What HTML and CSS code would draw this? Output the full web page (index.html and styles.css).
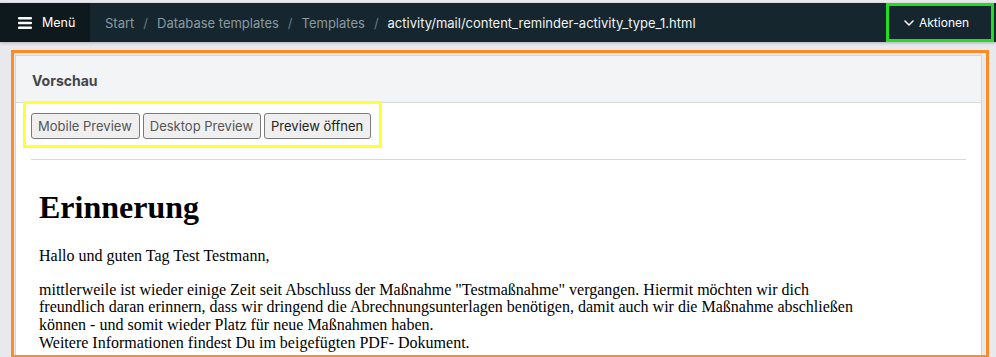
FILE: index.html
```html
<!DOCTYPE html>
<html lang="de">
<head>
    <meta charset="UTF-8">
    <title>Vorschau</title>
    <link rel="stylesheet" href="styles.css">
</head>
<body>
    <header class="topbar">
        <button class="menu-button">
            <svg class="menu-icon" width="14" height="12" viewBox="0 0 14 12">
                <rect x="0" y="0" width="14" height="2.4" rx="1" fill="#fff"/>
                <rect x="0" y="4.8" width="14" height="2.4" rx="1" fill="#fff"/>
                <rect x="0" y="9.6" width="14" height="2.4" rx="1" fill="#fff"/>
            </svg>
            Menü
        </button>
        <nav class="breadcrumb">
            <a href="#">Start</a>
            <span class="sep">/</span>
            <a href="#">Database templates</a>
            <span class="sep">/</span>
            <a href="#">Templates</a>
            <span class="sep">/</span>
            <span class="current">activity/mail/content_reminder-activity_type_1.html</span>
        </nav>
        <div class="actions-mark">
            <button class="actions-button">
                <svg width="10" height="6" viewBox="0 0 10 6">
                    <path d="M1 1 L5 5 L9 1" fill="none" stroke="#fff" stroke-width="1.5" stroke-linecap="round" stroke-linejoin="round"/>
                </svg>
                Aktionen
            </button>
        </div>
    </header>

    <main class="main">
        <div class="frame-mark">
            <section class="card">
                <div class="card-header">Vorschau</div>
                <div class="card-body">
                    <div class="toolbar-mark">
                        <div class="toolbar">
                            <button class="btn">Mobile Preview</button>
                            <button class="btn">Desktop Preview</button>
                            <button class="btn btn-active">Preview öffnen</button>
                        </div>
                    </div>
                    <hr class="divider">
                    <div class="mail">
                        <h1>Erinnerung</h1>
                        <p>Hallo und guten Tag Test Testmann,</p>
                        <p>mittlerweile ist wieder einige Zeit seit Abschluss der Maßnahme "Testmaßnahme" vergangen. Hiermit möchten wir dich<br>
                        freundlich daran erinnern, dass wir dringend die Abrechnungsunterlagen benötigen, damit auch wir die Maßnahme abschließen<br>
                        können - und somit wieder Platz für neue Maßnahmen haben.<br>
                        Weitere Informationen findest Du im beigefügten PDF- Dokument.</p>
                    </div>
                </div>
            </section>
        </div>
    </main>
</body>
</html>
```

FILE: styles.css
```css
html, body {
    margin: 0;
    height: 100%;
    overflow: hidden;
}
body {
    background: #e8e9ec;
    font-family: Inter, 'Noto Sans', sans-serif;
    padding-top: 3px;
    box-sizing: border-box;
}
.topbar {
    display: flex;
    align-items: stretch;
    height: 39px;
    background: #15262e;
    box-shadow: 0 1px 3px rgba(0, 0, 0, 0.25);
}
.menu-button {
    display: flex;
    align-items: center;
    gap: 10px;
    width: 90px;
    padding: 0 0 0 18px;
    background: #0e191d;
    border: none;
    color: #ffffff;
    font-family: inherit;
    font-size: 12.5px;
}
.breadcrumb {
    display: flex;
    align-items: center;
    flex: 1;
    padding-left: 15px;
    font-size: 13px;
}
.breadcrumb a {
    color: #8b9aa1;
    text-decoration: none;
}
.breadcrumb .sep {
    color: #6b7b82;
    margin: 0 9px;
}
.breadcrumb .current {
    color: #eef2f3;
}
.actions-mark {
    display: flex;
    border: 3px solid #22dd22;
    width: 108px;
    box-sizing: border-box;
    margin-right: 2px;
}
.actions-button {
    display: flex;
    align-items: center;
    gap: 5px;
    padding: 0 0 0 15px;
    background: none;
    border: none;
    color: #ffffff;
    font-family: inherit;
    font-size: 12px;
}
.main {
    padding: 8px 7px 0 11px;
}
.frame-mark {
    border: 3px solid #fd8b26;
    padding: 2px 4px 0 1px;
    height: 300px;
    overflow: hidden;
}
.card {
    background: #ffffff;
    border: 1px solid #d3d5d8;
    height: 100%;
}
.card-header {
    height: 47px;
    line-height: 50px;
    padding-left: 16px;
    background: #f3f4f6;
    border-bottom: 1px solid #d6d8db;
    color: #43464b;
    font-weight: 700;
    font-size: 14px;
    box-sizing: border-box;
}
.card-body {
    padding: 0 15px;
}
.toolbar-mark {
    display: inline-block;
    margin: -2px 0 0 -8px;
    border: 3px solid #ffff33;
    padding: 9px 8px 6px 5px;
}
.toolbar {
    display: flex;
    gap: 3px;
}
.btn {
    height: 26px;
    padding: 0 7px 0 6px;
    background: #efefef;
    border: 1px solid #7a7a7a;
    border-radius: 3px;
    color: #555555;
    font-family: inherit;
    font-size: 13px;
}
.btn-active {
    color: #222222;
}
.divider {
    border: none;
    border-top: 1px solid #d8d8d8;
    margin: 11px 0 0;
}
.mail {
    padding: 8px;
    font-family: 'Liberation Serif', 'Times New Roman', serif;
    font-size: 16px;
    color: #000000;
}
.mail h1 {
    font-size: 32px;
    margin: 21px 0;
}
.mail p {
    margin: 16px 0;
    line-height: 17.7px;
}
```
